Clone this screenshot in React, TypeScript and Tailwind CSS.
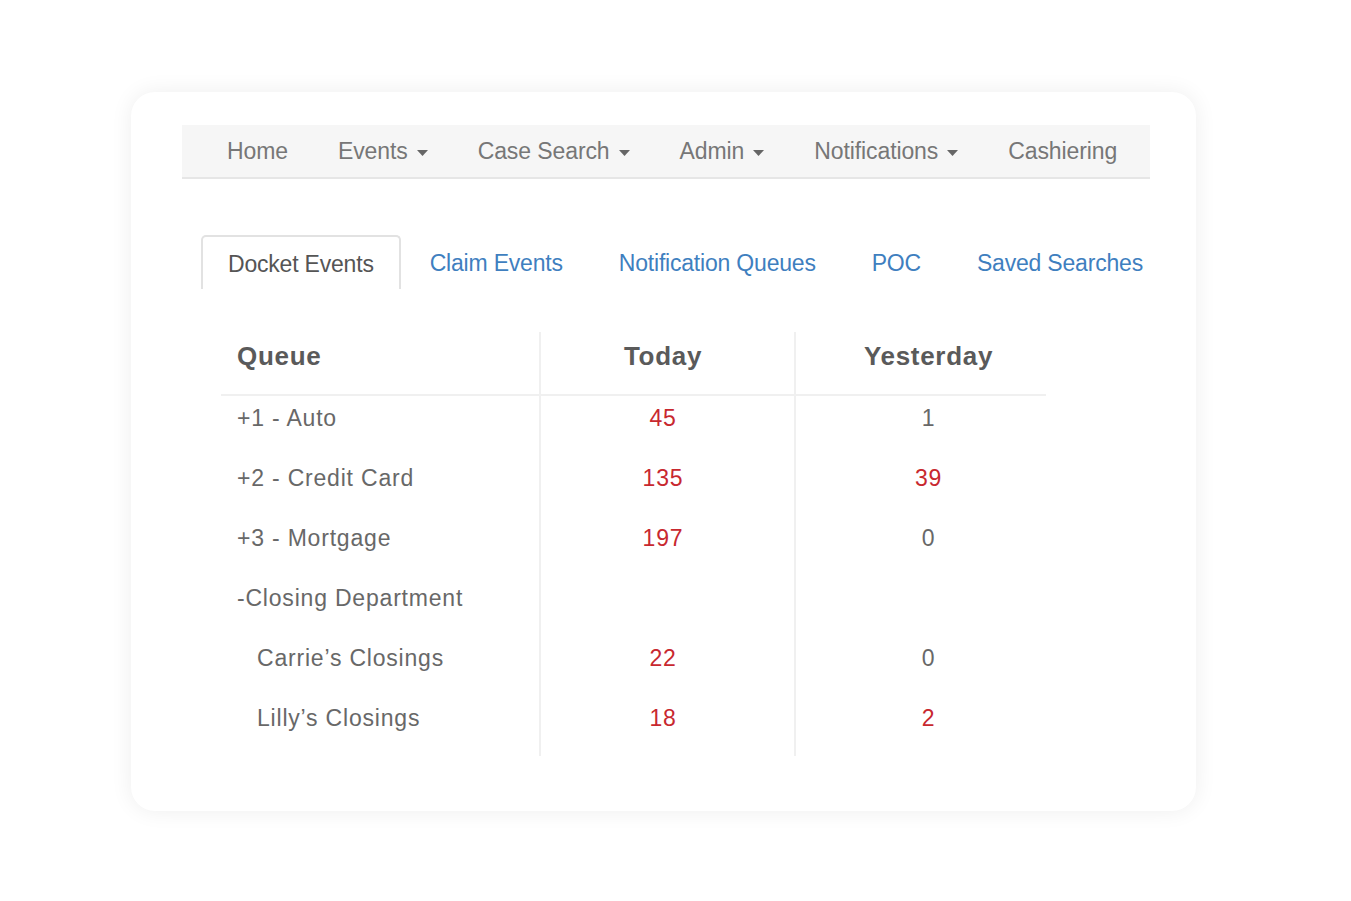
import React from "react";

const navItems = [
  { label: "Home", caret: false },
  { label: "Events", caret: true },
  { label: "Case Search", caret: true },
  { label: "Admin", caret: true },
  { label: "Notifications", caret: true },
  { label: "Cashiering", caret: false },
];

const tabs = ["Docket Events", "Claim Events", "Notification Queues", "POC", "Saved Searches"];

type Row = { name: string; indent?: boolean; today?: string; yesterday?: string; todayRed?: boolean; yRed?: boolean };

const rows: Row[] = [
  { name: "+1 - Auto", today: "45", yesterday: "1", todayRed: true },
  { name: "+2 - Credit Card", today: "135", yesterday: "39", todayRed: true, yRed: true },
  { name: "+3 - Mortgage", today: "197", yesterday: "0", todayRed: true },
  { name: "-Closing Department" },
  { name: "Carrie\u2019s Closings", indent: true, today: "22", yesterday: "0", todayRed: true },
  { name: "Lilly\u2019s Closings", indent: true, today: "18", yesterday: "2", todayRed: true, yRed: true },
];

function Caret() {
  return (
    <svg width="11" height="6" viewBox="0 0 11 6" className="ml-[9px] mt-[3px] shrink-0">
      <path d="M0 0h11L5.5 6z" fill="#666" />
    </svg>
  );
}

export default function App() {
  return (
    <div className="min-h-[901px] bg-white pt-[92px] pl-[131px] font-['Liberation_Sans',Arial,sans-serif]">
      <div className="w-[1065px] h-[719px] rounded-[24px] bg-white shadow-[0_0_22px_rgba(0,0,0,0.07)] pt-[33px] pl-[51px]">
        {/* Top navigation */}
        <div className="w-[968px] h-[54px] bg-[#f6f6f6] border-b-2 border-[#e6e6e6] flex items-center pl-[20px] whitespace-nowrap">
          {navItems.map((item) => (
            <div key={item.label} className="flex items-center shrink-0 px-[25px] text-[23px] tracking-[-0.1px] text-[#777]">
              {item.label}
              {item.caret && <Caret />}
            </div>
          ))}
        </div>

        {/* Tabs */}
        <div className="mt-[56px] ml-[19px] flex h-[54px] whitespace-nowrap">
          {tabs.map((t, i) => (
            <div
              key={t}
              className={
                i === 0
                  ? "mr-[2px] flex items-center shrink-0 pt-[3px] px-[25px] border-2 border-b-0 border-[#e2e2e2] rounded-t-[5px] text-[23px] tracking-[-0.2px] text-[#555]"
                  : "mr-[2px] flex items-center shrink-0 pt-[3px] px-[27px] text-[23px] tracking-[-0.2px] text-[#3f7fbf]"
              }
            >
              {t}
            </div>
          ))}
        </div>

        {/* Queue table */}
        <div className="mt-[43px] ml-[39px] w-[825px]">
          <div className="grid grid-cols-[318px_255px_252px] h-[64px] border-b-2 border-[#f0f0f0] text-[26px] font-bold tracking-[0.7px] text-[#5a5a5a] leading-none">
            <div className="pl-[16px] pt-[11px]">Queue</div>
            <div className="border-l-2 border-[#f0f0f0] pr-[9px] pt-[11px] text-center">Today</div>
            <div className="border-l-2 border-[#f0f0f0] pl-[15px] pt-[11px] text-center">Yesterday</div>
          </div>
          {rows.map((r) => (
            <div key={r.name} className="grid grid-cols-[318px_255px_252px] h-[60px] text-[23px] tracking-[0.8px] leading-none text-[#686868]">
              <div className={r.indent ? "pl-[36px] pt-[11px]" : "pl-[16px] pt-[11px]"}>{r.name}</div>
              <div className={"border-l-2 border-[#f0f0f0] pr-[9px] pt-[11px] text-center " + (r.todayRed ? "text-[#c8282f]" : "")}>
                {r.today}
              </div>
              <div className={"border-l-2 border-[#f0f0f0] pl-[15px] pt-[11px] text-center " + (r.yRed ? "text-[#c8282f]" : "")}>
                {r.yesterday}
              </div>
            </div>
          ))}
        </div>
      </div>
    </div>
  );
}
